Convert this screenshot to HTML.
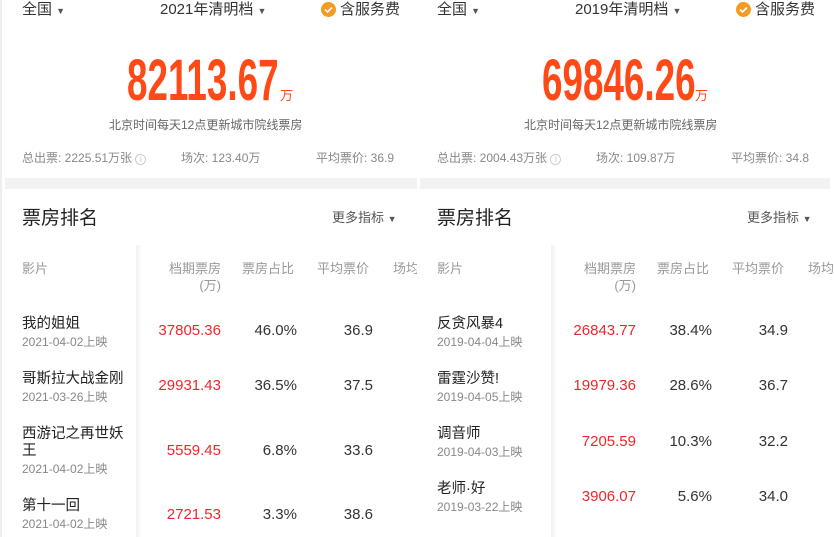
<!DOCTYPE html>
<html><head><meta charset="utf-8"><style>
*{margin:0;padding:0;box-sizing:border-box}
body{width:834px;height:537px;background:#fff;position:relative;overflow:hidden;font-family:"Liberation Sans","Noto Sans CJK SC",sans-serif;color:#222}
.p{position:absolute;top:0;width:417px;height:537px;overflow:hidden}
.a{position:absolute;white-space:nowrap;line-height:1}
.t{font-size:15px;color:#333}
.big{font-family:"Liberation Sans Narrow","Liberation Sans",sans-serif;font-weight:bold;font-size:58px;color:#ff4a17;transform:scaleX(0.635);transform-origin:left top}
.sub{font-size:12px;color:#666}
.st{font-size:12px;color:#888}
.band{position:absolute;top:178px;height:11px;background:#f2f2f2}
.h{font-size:13px;color:#999}
.n{font-size:14.5px;color:#222}
.d{font-size:12px;color:#888}
.r{font-size:15px;color:#f0262c;text-align:right}
.v{font-size:15px;color:#333;text-align:right}
.sh{position:absolute;left:136px;top:245px;width:6px;height:300px;background:linear-gradient(90deg,#f1f1f1,#fff)}
.chk{position:absolute;width:15px;height:15px;border-radius:50%;background:#f59a23}
</style></head><body>
<div style="position:absolute;left:0;top:0;width:2px;height:537px;background:#eee"></div>

<div class="p" style="left:0">
<div class="a t" style="left:22px;top:2px">全国 <span style="font-size:9px;color:#555">▼</span></div>
<div class="a t" style="left:160px;top:2px">2021年清明档 <span style="font-size:9px;color:#555">▼</span></div>
<div class="chk" style="left:321px;top:2px"><svg width="15" height="15"><path d="M4 7.5l2.5 2.5 4.5-4.5" stroke="#fff" stroke-width="1.6" fill="none"/></svg></div>
<div class="a t" style="left:340px;top:2px">含服务费</div>
<div class="a big" style="left:127px;top:52px">82113.67</div>
<div class="a" style="left:280px;top:89px;font-size:13px;color:#ff4a17">万</div>
<div class="a sub" style="left:109px;top:119px">北京时间每天12点更新城市院线票房</div>
<div class="a st" style="left:22px;top:152px">总出票: 2225.51万张 <span style="display:inline-block;width:11px;height:11px;border:1px solid #ccc;border-radius:50%;font-size:8px;text-align:center;line-height:9px;color:#bbb">i</span></div>
<div class="a st" style="left:181px;top:152px">场次: 123.40万</div>
<div class="a st" style="left:316px;top:152px">平均票价: 36.9</div>
<div class="band" style="left:5px;width:412px"></div>
<div class="a" style="left:22px;top:209px;font-size:19px;color:#222">票房排名</div>
<div class="a" style="left:332px;top:211px;font-size:13px;color:#555">更多指标 <span style="font-size:9px">▼</span></div>
<div class="sh"></div>
<div class="a h" style="left:22px;top:262px">影片</div>
<div class="a h" style="left:140px;width:81px;top:262px;text-align:right">档期票房</div>
<div class="a h" style="left:140px;width:81px;top:279px;text-align:right">(万)</div>
<div class="a h" style="left:242px;top:262px">票房占比</div>
<div class="a h" style="left:317px;top:262px">平均票价</div>
<div class="a h" style="left:393px;top:262px">场均</div>

<div class="a n" style="left:22px;top:317px">我的姐姐</div><div class="a d" style="left:22px;top:336px">2021-04-02上映</div>
<div class="a r" style="left:140px;width:81px;top:323px">37805.36</div><div class="a v" style="left:230px;width:67px;top:323px">46.0%</div><div class="a v" style="left:320px;width:53px;top:323px">36.9</div>

<div class="a n" style="left:22px;top:372px">哥斯拉大战金刚</div><div class="a d" style="left:22px;top:391px">2021-03-26上映</div>
<div class="a r" style="left:140px;width:81px;top:378px">29931.43</div><div class="a v" style="left:230px;width:67px;top:378px">36.5%</div><div class="a v" style="left:320px;width:53px;top:378px">37.5</div>

<div class="a n" style="left:22px;top:427px">西游记之再世妖</div><div class="a n" style="left:22px;top:444px">王</div><div class="a d" style="left:22px;top:463px">2021-04-02上映</div>
<div class="a r" style="left:140px;width:81px;top:443px">5559.45</div><div class="a v" style="left:230px;width:67px;top:443px">6.8%</div><div class="a v" style="left:320px;width:53px;top:443px">33.6</div>

<div class="a n" style="left:22px;top:499px">第十一回</div><div class="a d" style="left:22px;top:518px">2021-04-02上映</div>
<div class="a r" style="left:140px;width:81px;top:507px">2721.53</div><div class="a v" style="left:230px;width:67px;top:507px">3.3%</div><div class="a v" style="left:320px;width:53px;top:507px">38.6</div>
</div>

<div class="p" style="left:415px;width:419px">
<div class="a t" style="left:22px;top:2px">全国 <span style="font-size:9px;color:#555">▼</span></div>
<div class="a t" style="left:160px;top:2px">2019年清明档 <span style="font-size:9px;color:#555">▼</span></div>
<div class="chk" style="left:321px;top:2px"><svg width="15" height="15"><path d="M4 7.5l2.5 2.5 4.5-4.5" stroke="#fff" stroke-width="1.6" fill="none"/></svg></div>
<div class="a t" style="left:340px;top:2px">含服务费</div>
<div class="a big" style="left:127px;top:52px">69846.26</div>
<div class="a" style="left:280px;top:89px;font-size:13px;color:#ff4a17">万</div>
<div class="a sub" style="left:109px;top:119px">北京时间每天12点更新城市院线票房</div>
<div class="a st" style="left:22px;top:152px">总出票: 2004.43万张 <span style="display:inline-block;width:11px;height:11px;border:1px solid #ccc;border-radius:50%;font-size:8px;text-align:center;line-height:9px;color:#bbb">i</span></div>
<div class="a st" style="left:181px;top:152px">场次: 109.87万</div>
<div class="a st" style="left:316px;top:152px">平均票价: 34.8</div>
<div class="band" style="left:5px;width:410px"></div>
<div class="a" style="left:22px;top:209px;font-size:19px;color:#222">票房排名</div>
<div class="a" style="left:332px;top:211px;font-size:13px;color:#555">更多指标 <span style="font-size:9px">▼</span></div>
<div class="sh"></div>
<div class="a h" style="left:22px;top:262px">影片</div>
<div class="a h" style="left:140px;width:81px;top:262px;text-align:right">档期票房</div>
<div class="a h" style="left:140px;width:81px;top:279px;text-align:right">(万)</div>
<div class="a h" style="left:242px;top:262px">票房占比</div>
<div class="a h" style="left:317px;top:262px">平均票价</div>
<div class="a h" style="left:393px;top:262px">场均</div>

<div class="a n" style="left:22px;top:317px">反贪风暴4</div><div class="a d" style="left:22px;top:336px">2019-04-04上映</div>
<div class="a r" style="left:140px;width:81px;top:323px">26843.77</div><div class="a v" style="left:230px;width:67px;top:323px">38.4%</div><div class="a v" style="left:320px;width:53px;top:323px">34.9</div>

<div class="a n" style="left:22px;top:372px">雷霆沙赞!</div><div class="a d" style="left:22px;top:391px">2019-04-05上映</div>
<div class="a r" style="left:140px;width:81px;top:378px">19979.36</div><div class="a v" style="left:230px;width:67px;top:378px">28.6%</div><div class="a v" style="left:320px;width:53px;top:378px">36.7</div>

<div class="a n" style="left:22px;top:427px">调音师</div><div class="a d" style="left:22px;top:446px">2019-04-03上映</div>
<div class="a r" style="left:140px;width:81px;top:434px">7205.59</div><div class="a v" style="left:230px;width:67px;top:434px">10.3%</div><div class="a v" style="left:320px;width:53px;top:434px">32.2</div>

<div class="a n" style="left:22px;top:482px">老师·好</div><div class="a d" style="left:22px;top:501px">2019-03-22上映</div>
<div class="a r" style="left:140px;width:81px;top:489px">3906.07</div><div class="a v" style="left:230px;width:67px;top:489px">5.6%</div><div class="a v" style="left:320px;width:53px;top:489px">34.0</div>
</div>
</body></html>
